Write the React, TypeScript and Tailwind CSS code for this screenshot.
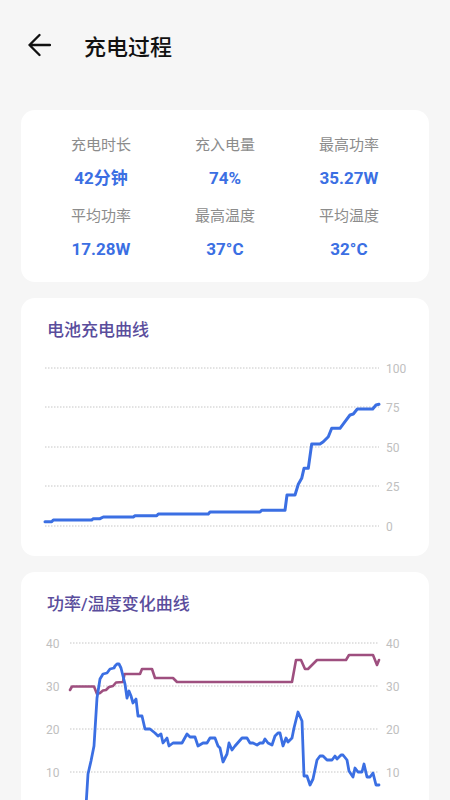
import React from "react";

type P = [number, number];

const toPts = (pts: P[], ox: number, oy: number) =>
  pts.map(([x, y]) => `${(x - ox).toFixed(1)},${(y - oy).toFixed(1)}`).join(" ");

const battery: P[] = [
  [45, 521.7], [51.7, 521.7], [53.3, 520], [91.7, 520], [93.3, 518.7], [100, 518.7],
  [103.3, 517], [133.3, 517], [135, 515.7], [156.7, 515.7], [158.3, 514], [208.3, 514],
  [210, 512], [260, 512], [261.7, 510.3], [285, 510.3], [287, 495], [295, 495],
  [298.3, 484.3], [301.7, 478.3], [304, 468.3], [308.3, 468.3], [311.7, 444], [320, 444],
  [323.3, 441.7], [328.3, 436.7], [331.7, 428.3], [340, 428.3], [345, 421.7], [350, 415],
  [353.3, 414], [357.3, 409], [372.7, 409], [376, 405], [379, 404.3],
];

const temp: P[] = [
  [70, 689], [72, 685.5], [94, 685.5], [97, 693], [100, 692], [103, 689.5], [106, 689],
  [109, 686], [113, 685], [116, 681.5], [123, 681], [124.5, 673], [140, 673], [142, 668],
  [152, 668], [155, 677], [173, 677], [177, 681], [292, 681], [296, 659], [301, 659],
  [305, 668], [308, 668], [313, 663], [317, 659], [346, 659], [349, 654], [373, 654],
  [377, 664], [379, 659],
];

const power: P[] = [
  [86, 805], [88, 773], [91, 760], [94, 745], [97, 697], [100, 678], [103, 673], [107, 672],
  [110, 668], [114, 667], [115, 665], [117, 663], [119, 663], [121, 667], [123, 675],
  [125, 683], [127, 697], [129, 690], [131, 695], [133, 702], [136, 698], [138, 715],
  [142, 715], [145, 728], [150, 728], [155, 732], [158, 735], [161, 733], [163, 742],
  [167, 737], [169, 745], [173, 742], [182, 742], [187, 733], [190, 736], [195, 736],
  [198, 745], [203, 742], [207, 742], [210, 737], [215, 737], [218, 745], [220, 747],
  [223, 761], [227, 753], [229, 742], [232, 749], [235, 745], [242, 737], [247, 737],
  [250, 742], [253, 742], [257, 744], [260, 742], [263, 742], [265, 738], [268, 742],
  [272, 744], [275, 735], [278, 732], [280, 732], [283, 745], [286, 737], [288, 741],
  [292, 737], [294, 727], [298, 711], [302, 720], [304, 775], [307, 775], [310, 784],
  [313, 778], [317, 759], [320, 755], [323, 755], [327, 759], [332, 759], [335, 755],
  [337, 758], [341, 754], [343, 754], [347, 759], [349, 770], [353, 776], [355, 767],
  [358, 771], [362, 771], [364, 763], [367, 776], [370, 776], [373, 772], [376, 784],
  [379, 784],
];

const FONT = "font-['Roboto','Noto_Sans_CJK_SC',sans-serif]";

const stats = [
  ["充电时长", "42分钟"],
  ["充入电量", "74%"],
  ["最高功率", "35.27W"],
  ["平均功率", "17.28W"],
  ["最高温度", "37°C"],
  ["平均温度", "32°C"],
];

const GRID = "#c6c6c6";
const LABEL = "#c0c0c0";

function BatteryChart() {
  const ox = 21;
  const oy = 342;
  const grid = [
    [368, "100"],
    [407, "75"],
    [447, "50"],
    [486, "25"],
    [526, "0"],
  ] as const;
  return (
    <svg width={408} height={214} className="block">
      {grid.map(([y, t]) => (
        <g key={t}>
          <line x1={45 - ox} x2={379 - ox} y1={y - oy} y2={y - oy} stroke={GRID} strokeWidth={1} strokeDasharray="1.5 1.5" />
          <text x={386 - ox} y={y - oy + 4.5} fontSize={12} fill={LABEL} fontFamily="Roboto, sans-serif">{t}</text>
        </g>
      ))}
      <polyline points={toPts(battery, ox, oy)} fill="none" stroke="#3b6fe3" strokeWidth={3} strokeLinejoin="round" strokeLinecap="round" />
    </svg>
  );
}

function PowerChart() {
  const ox = 21;
  const oy = 615;
  const grid = [
    [642, "40"],
    [685, "30"],
    [728, "20"],
    [771, "10"],
  ] as const;
  return (
    <svg width={408} height={220} className="block">
      {grid.map(([y, t]) => (
        <g key={t}>
          <line x1={70 - ox} x2={379 - ox} y1={y - oy} y2={y - oy} stroke={GRID} strokeWidth={1} strokeDasharray="1.5 1.5" />
          <text x={46 - ox} y={y - oy + 4.5} fontSize={12} fill={LABEL} fontFamily="Roboto, sans-serif">{t}</text>
          <text x={386 - ox} y={y - oy + 4.5} fontSize={12} fill={LABEL} fontFamily="Roboto, sans-serif">{t}</text>
        </g>
      ))}
      <polyline points={toPts(temp, ox, oy)} fill="none" stroke="#9e4f7f" strokeWidth={2.6} strokeLinejoin="round" strokeLinecap="round" />
      <polyline points={toPts(power, ox, oy)} fill="none" stroke="#3b6fe3" strokeWidth={2.8} strokeLinejoin="round" strokeLinecap="round" />
    </svg>
  );
}

export default function App() {
  return (
    <div className={`min-h-[800px] w-[450px] bg-[#f6f6f6] ${FONT}`}>
      <div className="flex h-[90px] items-center">
        <svg width={24} height={24} viewBox="0 0 24 24" className="ml-[27px]">
          <path d="M23 12H2.5M12.5 2 2.5 12l10 10" fill="none" stroke="#111" strokeWidth={2.3} strokeLinecap="round" strokeLinejoin="round" />
        </svg>
        <div className="ml-[33px] text-[22px] font-medium leading-[28px] text-[#111] font-['Noto_Sans_CJK_SC',sans-serif]">充电过程</div>
      </div>

      <div className="mx-[21px] mt-[20px] flex flex-col gap-[16px]">
        <div className="grid grid-cols-3 gap-y-[16px] rounded-[14px] bg-white px-[18px] pb-[21px] pt-[25px]">
          {stats.map(([l, v]) => (
            <div key={l} className="flex flex-col items-center gap-[11px]">
              <div className="text-[15px] leading-[20px] text-[#8c8c8c]">{l}</div>
              <div className="text-[17px] font-bold leading-[24px] text-[#3b6fe3]">{v}</div>
            </div>
          ))}
        </div>

        <div className="rounded-[14px] bg-white">
          <div className="pl-[26px] pt-[20px] text-[17px] font-medium leading-[24px] text-[#5a4d9c]">电池充电曲线</div>
          <BatteryChart />
        </div>

        <div className="rounded-[14px] bg-white">
          <div className="pl-[26px] pt-[20px] text-[17px] font-medium leading-[24px] text-[#5a4d9c]">功率/温度变化曲线</div>
          <PowerChart />
        </div>
      </div>
    </div>
  );
}
